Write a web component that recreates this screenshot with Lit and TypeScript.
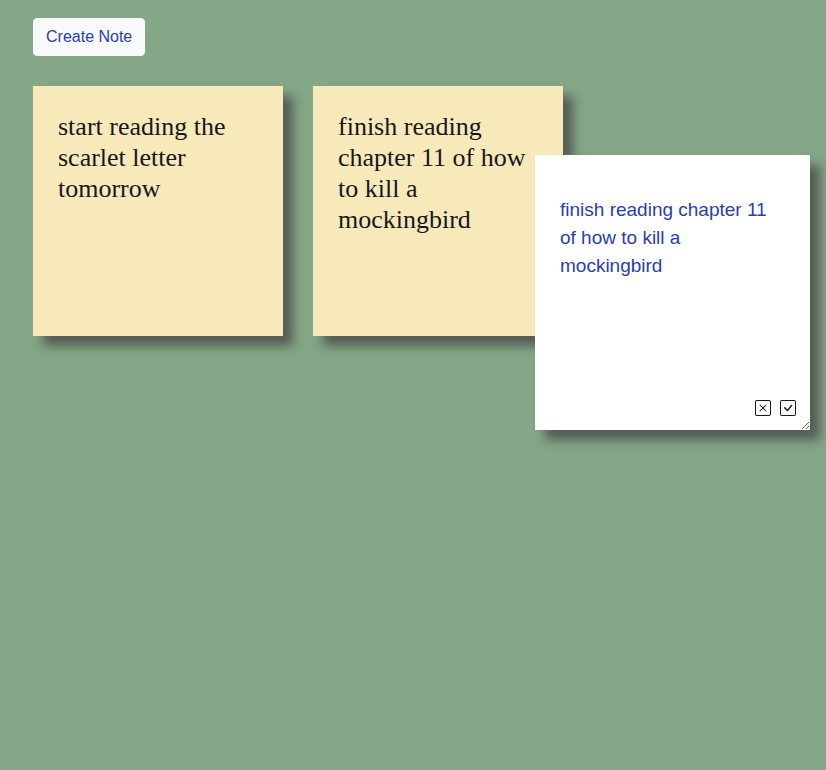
import { LitElement, html, css } from "lit";
import { customElement, property, state } from "lit/decorators.js";

@customElement("sticky-note")
class StickyNote extends LitElement {
  @property() text = "";

  static styles = css`
    :host {
      display: block;
      box-sizing: border-box;
      width: 250px;
      height: 250px;
      padding: 25px;
      background: #f8e9bb;
      box-shadow: 10px 10px 10px #555c55;
    }
    .text {
      margin: 0;
      font: 26px/31px "Liberation Serif", "Times New Roman", serif;
      color: #16181b;
    }
  `;

  render() {
    return html`<p class="text">${this.text}</p>`;
  }
}

@customElement("note-editor")
class NoteEditor extends LitElement {
  @property() text = "";

  static styles = css`
    :host {
      display: block;
      position: relative;
      box-shadow: 10px 10px 10px #555c55;
    }
    .field {
      display: block;
      box-sizing: border-box;
      width: 275px;
      height: 275px;
      margin: 0;
      padding: 41px 25px 25px;
      border: 0;
      outline: 0;
      background: #ffffff;
      color: #2a3eb1;
      font: 19px/28px "Liberation Sans", Arial, sans-serif;
      resize: both;
    }
    .actions {
      position: absolute;
      right: 14px;
      bottom: 14px;
      display: flex;
      gap: 9px;
    }
    .action {
      display: block;
      padding: 0;
      border: 0;
      background: none;
      color: #16181b;
      cursor: pointer;
    }
    .icon {
      display: block;
      width: 16px;
      height: 16px;
      fill: currentColor;
    }
  `;

  render() {
    return html`
      <textarea class="field" aria-label="Note text" spellcheck="false" .value=${this.text}></textarea>
      <div class="actions">
        <button class="action" aria-label="Cancel">
          <svg class="icon" viewBox="0 0 16 16" aria-hidden="true">
            <path d="M14 1a1 1 0 0 1 1 1v12a1 1 0 0 1-1 1H2a1 1 0 0 1-1-1V2a1 1 0 0 1 1-1h12zM2 0a2 2 0 0 0-2 2v12a2 2 0 0 0 2 2h12a2 2 0 0 0 2-2V2a2 2 0 0 0-2-2H2z"/>
            <path d="M4.646 4.646a.5.5 0 0 1 .708 0L8 7.293l2.646-2.647a.5.5 0 0 1 .708.708L8.707 8l2.647 2.646a.5.5 0 0 1-.708.708L8 8.707l-2.646 2.647a.5.5 0 0 1-.708-.708L7.293 8 4.646 5.354a.5.5 0 0 1 0-.708z"/>
          </svg>
        </button>
        <button class="action" aria-label="Save">
          <svg class="icon" viewBox="0 0 16 16" aria-hidden="true">
            <path d="M14 1a1 1 0 0 1 1 1v12a1 1 0 0 1-1 1H2a1 1 0 0 1-1-1V2a1 1 0 0 1 1-1h12zM2 0a2 2 0 0 0-2 2v12a2 2 0 0 0 2 2h12a2 2 0 0 0 2-2V2a2 2 0 0 0-2-2H2z"/>
            <path d="M10.97 4.97a.75.75 0 0 1 1.071 1.05l-3.992 4.99a.75.75 0 0 1-1.08.02L4.324 8.384a.75.75 0 1 1 1.06-1.06l2.094 2.093 3.473-4.425a.235.235 0 0 1 .02-.022z"/>
          </svg>
        </button>
      </div>
    `;
  }
}

@customElement("app-root")
class AppRoot extends LitElement {
  @state() private notes = [
    "start reading the scarlet letter tomorrow",
    "finish reading chapter 11 of how to kill a mockingbird",
  ];

  static styles = css`
    :host {
      display: block;
      position: relative;
      box-sizing: border-box;
      min-height: 100vh;
      padding: 18px 33px;
      background: #84a787;
    }
    .create {
      display: block;
      padding: 6px 12px;
      border: 1px solid #f8f9fa;
      border-radius: 4px;
      background: #f8f9fa;
      color: #2a3eb1;
      font: 16px/24px "Liberation Sans", Arial, sans-serif;
      cursor: pointer;
    }
    .board {
      display: flex;
      flex-wrap: wrap;
      gap: 30px;
      margin-top: 30px;
    }
    .popup {
      position: absolute;
      top: 155px;
      left: 535px;
    }
  `;

  render() {
    return html`
      <button class="create">Create Note</button>
      <main class="board">
        ${this.notes.map((note) => html`<sticky-note .text=${note}></sticky-note>`)}
      </main>
      <note-editor class="popup" .text=${this.notes[1]}></note-editor>
    `;
  }
}
